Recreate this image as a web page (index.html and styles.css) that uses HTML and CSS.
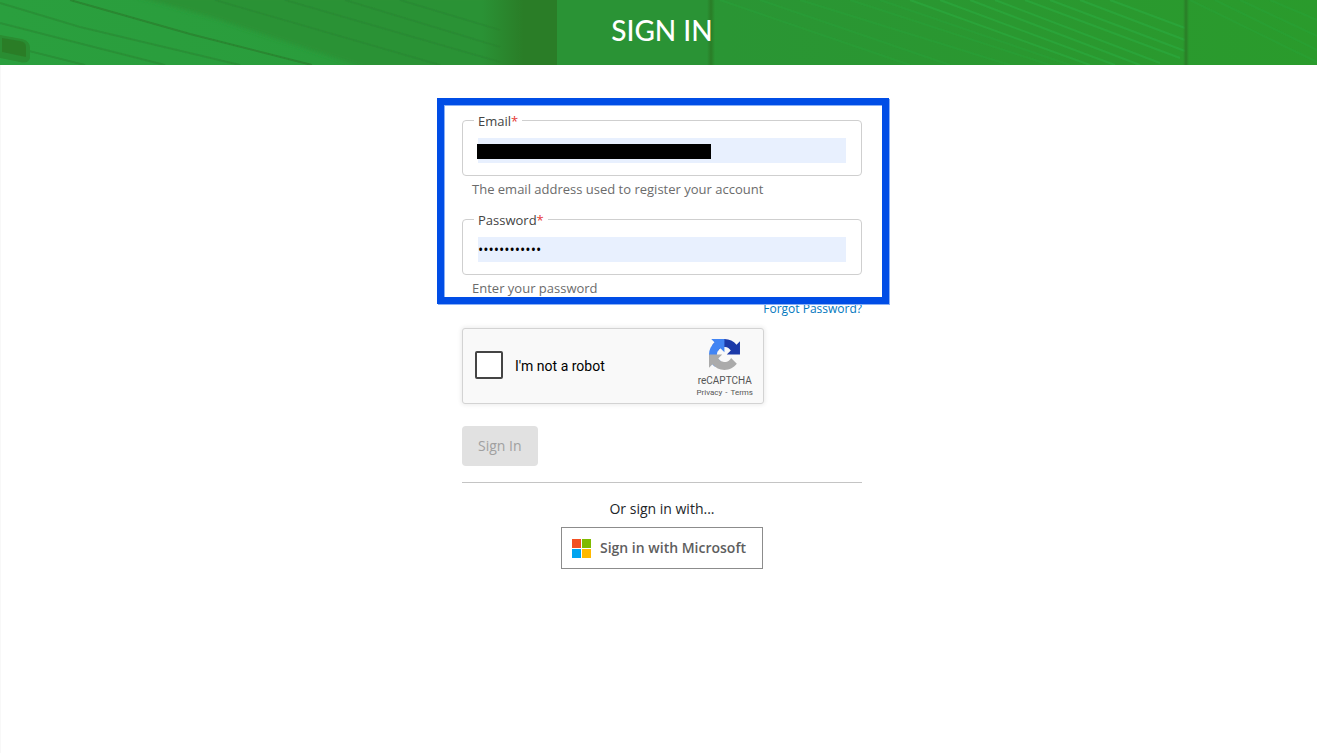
FILE: index.html
```html
<!DOCTYPE html>
<html lang="en">
<head>
  <meta charset="UTF-8">
  <meta name="viewport" content="width=device-width, initial-scale=1.0">
  <title>Sign In</title>
  <link rel="stylesheet" href="styles.css">
</head>

<body>
  <header class="banner">
    <svg class="banner-art" viewBox="0 0 1317 65" preserveAspectRatio="none" aria-hidden="true">
      <defs>
        <linearGradient id="base">
          <stop offset="0" stop-color="#2a9f3e"/>
          <stop offset="0.25" stop-color="#2a9d3c"/>
          <stop offset="0.55" stop-color="#2a9534"/>
          <stop offset="1" stop-color="#2a9b2c"/>
        </linearGradient>
        <linearGradient id="shade">
          <stop offset="0" stop-color="#2a7d27" stop-opacity="0"/>
          <stop offset="0.55" stop-color="#2a7d27"/>
          <stop offset="1" stop-color="#2a7d27"/>
        </linearGradient>
        <linearGradient id="seam">
          <stop offset="0" stop-color="#2a7d27" stop-opacity="0"/>
          <stop offset="0.5" stop-color="#2a7d27"/>
          <stop offset="1" stop-color="#2a7d27" stop-opacity="0"/>
        </linearGradient>
        <filter id="soft" x="-10%" y="-30%" width="120%" height="160%"><feGaussianBlur stdDeviation="2"/></filter>
        <filter id="thin" x="-10%" y="-30%" width="120%" height="160%"><feGaussianBlur stdDeviation="0.6"/></filter>
      </defs>
      <rect width="1317" height="65" fill="url(#base)"/>
      <path d="M135-4L210 17L365 68H520V-4z" fill="#2a9235" filter="url(#soft)"/>
      <g fill="none" stroke="#298730" stroke-width="2" filter="url(#thin)">
        <path d="M70 0L190 34L312 65"/>
        <path d="M0 3L80 27L240 65M0 23L90 46L165 65M25 50L85 65M215 0L440 65M285 0L500 62M345 0L500 47M400 0L500 30" opacity=".6"/>
      </g>
      <path d="M0 35L22 39Q30 41 30 48V58Q28 64 20 62L0 58z" fill="#2a8d31" filter="url(#thin)"/>
      <path d="M2 38L20 41Q26 42 26 47V57L2 52z" fill="#2a7d27" filter="url(#thin)"/>
      <rect x="482" width="75" height="65" fill="url(#shade)"/>
      <rect x="557" width="154" height="65" fill="#2a9335"/>
      <g fill="none" stroke="#2ba83c" stroke-width="2" filter="url(#thin)" opacity=".75">
        <path d="M910 0L1090 65M940 0L1115 65M970 0L1140 65M995 0L1160 63M1025 0L1180 58M1050 0L1185 51M1080 0L1185 40M1110 0L1185 28"/>
        <path d="M720 0L910 65M760 0L950 65M800 0L1010 65M850 0L1050 65M880 0L1070 65M1190 0L1317 62M1215 0L1317 50M1240 0L1317 36M1270 0L1317 20" opacity=".4"/>
      </g>
      <rect x="707" width="8" height="65" fill="url(#seam)"/>
      <rect x="1183" width="6" height="65" fill="url(#seam)"/>
    </svg>
    <h1>SIGN IN</h1>
  </header>

  <main class="page">
    <form class="signin">
      <div class="credentials">
        <div class="field">
          <label for="email">Email<span class="required">*</span></label>
          <input type="email" name="email" id="email" aria-describedby="email-hint">
          <span class="redacted"></span>
        </div>
        <p class="hint" id="email-hint">The email address used to register your account</p>

        <div class="field">
          <label for="password">Password<span class="required">*</span></label>
          <input type="password" name="password" id="password" value="abcdefghijkl" aria-describedby="password-hint">
        </div>
        <p class="hint" id="password-hint">Enter your password</p>
        <div class="highlight"></div>
      </div>

      <a class="forgot" href="#">Forgot Password?</a>

      <div class="captcha">
        <input type="checkbox" name="robot" id="robot">
        <label for="robot">I'm not a robot</label>
        <div class="captcha-brand">
          <svg width="31" height="31" viewBox="0 0 64 64" aria-hidden="true">
            <path fill="#1c3aa9" d="M64 31.955l-.033-1.37V4.687l-7.16 7.16C50.948 4.674 42.033.093 32.05.093c-10.4 0-19.622 4.96-25.458 12.64l11.736 11.86a15.55 15.55 0 0 1 4.754-5.334c2.05-1.6 4.952-2.906 8.968-2.906.485 0 .86.057 1.135.163 4.976.393 9.288 3.14 11.828 7.124l-8.307 8.307L64 31.953"/>
            <path fill="#4285f4" d="M31.862.094l-1.37.033H4.594l7.16 7.16C4.58 13.147 0 22.06 0 32.046c0 10.4 4.96 19.622 12.64 25.458L24.5 45.768a15.55 15.55 0 0 1-5.334-4.754c-1.6-2.05-2.906-4.952-2.906-8.968 0-.485.057-.86.163-1.135.393-4.976 3.14-9.288 7.124-11.828l8.307 8.307L31.86.095"/>
            <path fill="#ababab" d="M.001 32.045l.033 1.37v25.898l7.16-7.16c5.86 7.173 14.774 11.754 24.76 11.754 10.4 0 19.622-4.96 25.458-12.64l-11.736-11.86a15.55 15.55 0 0 1-4.754 5.334c-2.05 1.6-4.952 2.906-8.968 2.906-.485 0-.86-.057-1.135-.163-4.976-.393-9.288-3.14-11.828-7.124l8.307-8.307c-10.522.04-22.4.066-27.295-.005"/>
          </svg>
          <span class="captcha-name">reCAPTCHA</span>
          <span class="captcha-links"><a href="#">Privacy</a><span>-</span><a href="#">Terms</a></span>
        </div>
      </div>

      <button class="submit" type="submit" disabled>Sign In</button>

      <div class="other">
        <p>Or sign in with...</p>
        <button class="microsoft" type="button">
          <svg width="19" height="19" viewBox="0 0 19 19" aria-hidden="true">
            <path fill="#f25022" d="M0 0h9v9H0z"/>
            <path fill="#7fba00" d="M10 0h9v9h-9z"/>
            <path fill="#00a4ef" d="M0 10h9v9H0z"/>
            <path fill="#ffb900" d="M10 10h9v9h-9z"/>
          </svg>
          Sign in with Microsoft
        </button>
      </div>
    </form>
  </main>
</body>
</html>
```
FILE: styles.css
```css
* {
  box-sizing: border-box;
}

body {
  margin: 0;
  min-height: 100vh;
  display: flex;
  flex-direction: column;
  background: #fff;
  color: #212529;
  font-family: "Open Sans", sans-serif;
  font-size: 14px;
  line-height: 20px;
}

p {
  margin: 0;
}

a {
  color: #0277bd;
  text-decoration: none;
}

/* Banner */
.banner {
  position: relative;
  padding: 12px 0 17px 7px;
  background: #2a9a36;
  text-align: center;
}

.banner-art {
  position: absolute;
  top: 0;
  left: 0;
  width: 100%;
  height: 100%;
}

.banner h1 {
  position: relative;
  margin: 0;
  color: #fff;
  font-family: Lato, sans-serif;
  font-size: 28px;
  font-weight: 500;
  line-height: 36px;
}

.page {
  flex: 1;
  padding: 55px 0 32px 6px;
  border-left: 1px solid #f8f8f8;
}

.signin {
  display: flex;
  flex-direction: column;
  align-items: flex-start;
  width: 100%;
  max-width: 400px;
  margin: 0 auto;
}

/* Email and password */
.credentials {
  position: relative;
  width: 100%;
}

.field {
  position: relative;
  padding: 17px 15px 12px;
  border: 1px solid #cfcfcf;
  border-radius: 4px;
}

.field label {
  position: absolute;
  top: -9px;
  left: 11px;
  padding: 0 4px;
  background: #fff;
  color: #444;
  font-size: 13px;
  line-height: 18px;
}

.required {
  color: #e53935;
}

.field input {
  display: block;
  width: 100%;
  height: 25px;
  padding: 0;
  border: 0;
  background: #e8f0fe;
  font: inherit;
  color: #000;
}

.redacted {
  position: absolute;
  top: 23px;
  left: 14px;
  width: 234px;
  height: 15px;
  background: #000;
}

.hint {
  padding: 3px 10px 1px;
  color: #6b6b6b;
  font-size: 13px;
  line-height: 20px;
}

.hint + .field {
  margin-top: 19px;
}

.highlight {
  position: absolute;
  top: -22px;
  right: -27px;
  bottom: -5px;
  left: -25px;
  border: 7px solid #004de6;
  box-shadow: 1px 1px #8ab0f5, inset 1px 1px #8ab0f5;
  pointer-events: none;
}

.forgot {
  align-self: flex-end;
  font-size: 12px;
}

/* Captcha */
.captcha {
  display: flex;
  align-items: center;
  width: 302px;
  height: 76px;
  margin: 9px 0 22px;
  padding: 0 10px 0 12px;
  border: 1px solid #d3d3d3;
  border-radius: 3px;
  background: #f9f9f9;
  box-shadow: 0 0 4px 1px rgba(0, 0, 0, 0.08);
  color: #000;
  font-family: Roboto, sans-serif;
}

.captcha input {
  appearance: none;
  width: 28px;
  height: 28px;
  margin: 0 12px 2px 0;
  border: 2px solid #444;
  border-radius: 2px;
  background: #fff;
}

.captcha-brand {
  display: flex;
  flex-direction: column;
  align-items: center;
  margin-left: auto;
  padding-top: 6px;
  color: #555;
}

.captcha-name {
  margin-top: 4px;
  font-size: 10px;
  line-height: 13px;
}

.captcha-links {
  display: flex;
  gap: 3px;
  font-size: 8px;
  line-height: 12px;
}

.captcha-links a {
  color: #555;
}

/* Buttons */
.submit {
  height: 40px;
  padding: 0 16px;
  border: 0;
  border-radius: 4px;
  background: #e1e1e1;
  color: #a0a0a0;
  font: inherit;
}

.other {
  display: flex;
  flex-direction: column;
  align-items: center;
  gap: 8px;
  width: 100%;
  margin-top: 16px;
  padding-top: 16px;
  border-top: 1px solid #c4c4c4;
}

.microsoft {
  display: flex;
  align-items: center;
  gap: 9px;
  height: 42px;
  padding: 0 16px 0 10px;
  border: 1px solid #8c8c8c;
  background: #fff;
  color: #5e5e5e;
  font: inherit;
  font-weight: 600;
}
```
